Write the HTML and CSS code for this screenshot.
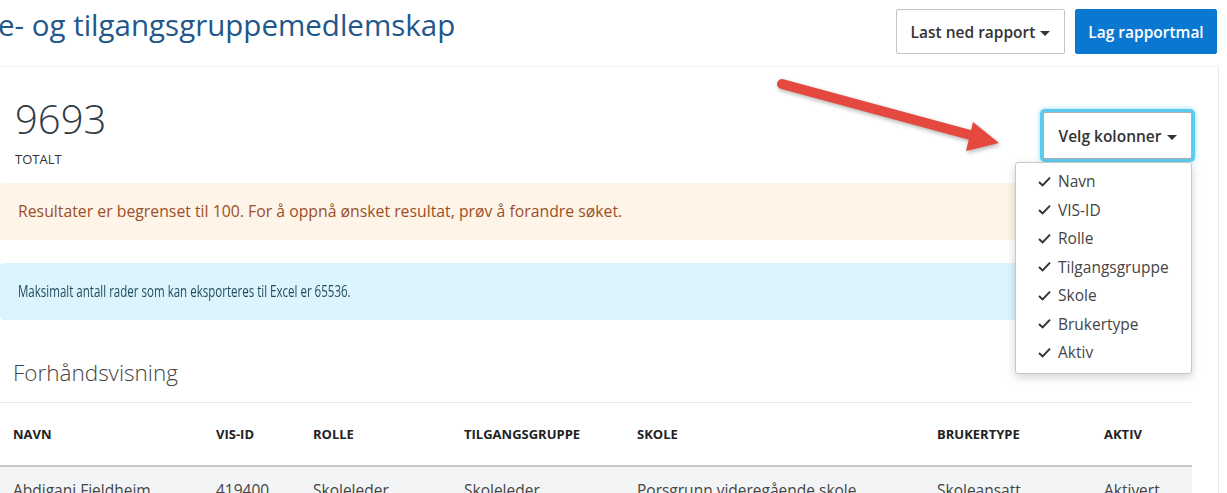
FILE: index.html
```html
<!DOCTYPE html>
<html lang="no">
<head>
    <meta charset="UTF-8">
    <meta name="viewport" content="width=device-width, initial-scale=1.0">
    <title>Rolle- og tilgangsgruppemedlemskap</title>
    <link rel="stylesheet" href="styles.css">
</head>
<body>
    <header class="topbar">
        <h1 class="page-title">e- og tilgangsgruppemedlemskap</h1>
        <div class="actions">
            <button class="btn btn-default btn-report">Last ned rapport <span class="caret"></span></button>
            <button class="btn btn-primary">Lag rapportmal</button>
        </div>
    </header>

    <main class="card">
        <div class="summary">
            <div class="stat">
                <div class="stat-value">9693</div>
                <div class="stat-label">TOTALT</div>
            </div>
            <div class="column-picker">
                <button class="btn btn-default btn-focus">Velg kolonner <span class="caret"></span></button>
                <ul class="dropdown">
                    <li><svg class="check" viewBox="0 0 13 11"><path d="M1 6 L4.6 9.4 L12 1.6"/></svg>Navn</li>
                    <li><svg class="check" viewBox="0 0 13 11"><path d="M1 6 L4.6 9.4 L12 1.6"/></svg>VIS-ID</li>
                    <li><svg class="check" viewBox="0 0 13 11"><path d="M1 6 L4.6 9.4 L12 1.6"/></svg>Rolle</li>
                    <li><svg class="check" viewBox="0 0 13 11"><path d="M1 6 L4.6 9.4 L12 1.6"/></svg>Tilgangsgruppe</li>
                    <li><svg class="check" viewBox="0 0 13 11"><path d="M1 6 L4.6 9.4 L12 1.6"/></svg>Skole</li>
                    <li><svg class="check" viewBox="0 0 13 11"><path d="M1 6 L4.6 9.4 L12 1.6"/></svg>Brukertype</li>
                    <li><svg class="check" viewBox="0 0 13 11"><path d="M1 6 L4.6 9.4 L12 1.6"/></svg>Aktiv</li>
                </ul>
            </div>
        </div>

        <div class="alert alert-warning">Resultater er begrenset til 100. For å oppnå ønsket resultat, prøv å forandre søket.</div>
        <div class="alert alert-info"><span class="squeeze">Maksimalt antall rader som kan eksporteres til Excel er 65536.</span></div>

        <h2 class="section-title">Forhåndsvisning</h2>

        <table class="preview">
            <colgroup>
                <col style="width: 203px">
                <col style="width: 97px">
                <col style="width: 151px">
                <col style="width: 173px">
                <col style="width: 300px">
                <col style="width: 167px">
                <col style="width: 101px">
            </colgroup>
            <thead>
                <tr>
                    <th>Navn</th>
                    <th>VIS-ID</th>
                    <th>Rolle</th>
                    <th>Tilgangsgruppe</th>
                    <th>Skole</th>
                    <th>Brukertype</th>
                    <th>Aktiv</th>
                </tr>
            </thead>
            <tbody>
                <tr>
                    <td>Abdigani Fjeldheim</td>
                    <td>419400</td>
                    <td>Skoleleder</td>
                    <td>Skoleleder</td>
                    <td>Porsgrunn videregående skole</td>
                    <td>Skoleansatt</td>
                    <td>Aktivert</td>
                </tr>
            </tbody>
        </table>
    </main>

    <!-- annotation arrow drawn on top of the screenshot -->
    <svg class="arrow" width="240" height="100" viewBox="0 0 240 100">
        <line x1="12" y1="14" x2="204" y2="66" stroke="#e5483f" stroke-width="10" stroke-linecap="round"/>
        <polygon points="203,52 196,81 229,73" fill="#e5483f"/>
    </svg>
</body>
</html>
```

FILE: styles.css
```css
body {
    font-family: "Open Sans", "Liberation Sans", sans-serif;
    margin: 0;
    padding: 0;
    background-color: #fff;
    color: #333;
    overflow: hidden;
}

.topbar {
    display: flex;
    justify-content: space-between;
    align-items: flex-start;
    height: 66px;
    padding-right: 10px;
}

.page-title {
    margin: 5px 0 0 -2px;
    font-size: 29.5px;
    font-weight: 400;
    line-height: 40px;
    color: #22578a;
}

.actions {
    display: flex;
    gap: 10px;
    margin-top: 9px;
}

.btn {
    font-family: inherit;
    font-size: 15.5px;
    font-weight: 600;
    height: 45px;
    padding: 0 8px;
    border-radius: 2px;
    white-space: nowrap;
    cursor: pointer;
}

.btn-default {
    background-color: #fff;
    color: #333;
    border: 1px solid #c4c4c4;
}

.btn-report {
    width: 169px;
}

.btn-primary {
    background-color: #0a78d1;
    color: #fff;
    border: 1px solid #0a78d1;
    width: 142px;
}

.caret {
    display: inline-block;
    width: 0;
    height: 0;
    margin-left: 1px;
    vertical-align: middle;
    border-top: 5px solid #333;
    border-left: 5px solid transparent;
    border-right: 5px solid transparent;
}

.card {
    display: block;
    width: 1192px;
    padding-right: 26px;
    border-top: 1px solid #f1f1f1;
    border-right: 1px solid #e8e8e8;
    min-height: 500px;
}

.summary {
    display: flex;
    justify-content: space-between;
    align-items: flex-start;
}

.stat {
    padding: 23px 0 0 15px;
}

.stat-value {
    font-size: 40px;
    font-weight: 300;
    line-height: 57px;
    color: #2f3a45;
}

.stat-label {
    margin-top: 3px;
    font-size: 13px;
    line-height: 18px;
    color: #333;
}

.column-picker {
    position: relative;
    margin-top: 45px;
}

.btn-focus {
    width: 149px;
    height: 47px;
    border-color: #b0b0b0;
    box-shadow: 0 0 0 3px #5ccbf0, 0 0 5px 3px #8fdcf6;
}

.dropdown {
    position: absolute;
    top: 50px;
    right: 0;
    width: 177px;
    box-sizing: border-box;
    margin: 0;
    padding: 4px 0 6px 22px;
    list-style: none;
    background-color: #fff;
    border: 1px solid #c8c8c8;
    border-radius: 3px;
    box-shadow: 0 3px 10px rgba(0, 0, 0, 0.18);
    z-index: 2;
}

.dropdown li {
    display: flex;
    align-items: center;
    height: 28.5px;
    font-size: 15.5px;
    color: #444;
}

.check {
    width: 13px;
    height: 11px;
    margin-right: 7px;
    fill: none;
    stroke: #333;
    stroke-width: 2;
}

.alert {
    margin-top: 15px;
    padding: 18px;
    font-size: 15.8px;
    line-height: 21px;
    border-radius: 4px;
}

.alert-warning {
    background-color: #fef4e8;
    color: #9c4f26;
}

.alert-info {
    margin-top: 23px;
    background-color: #dcf5fc;
    color: #1f4b5e;
    white-space: nowrap;
}

.squeeze {
    display: inline-block;
    transform: scaleX(0.73);
    transform-origin: left center;
}

.section-title {
    margin: 36px 0 0 0;
    padding: 0 0 13px 13px;
    font-size: 22.5px;
    font-weight: 300;
    line-height: 33px;
    color: #444;
    border-bottom: 1px solid #e6e6e6;
}

.preview {
    width: 1192px;
    table-layout: fixed;
    border-collapse: collapse;
}

.preview th {
    text-align: left;
    padding: 22px 0 22px 13px;
    font-size: 13px;
    font-weight: 700;
    line-height: 18px;
    text-transform: uppercase;
    color: #222;
    border-bottom: 2px solid #c8c8c8;
}

.preview td {
    padding: 13px 0 13px 13px;
    font-size: 15.5px;
    line-height: 21px;
    color: #444;
    background-color: #f3f4f5;
    white-space: nowrap;
}

.arrow {
    position: absolute;
    left: 770px;
    top: 70px;
    filter: drop-shadow(1px 2px 2px rgba(0, 0, 0, 0.3));
}
```
